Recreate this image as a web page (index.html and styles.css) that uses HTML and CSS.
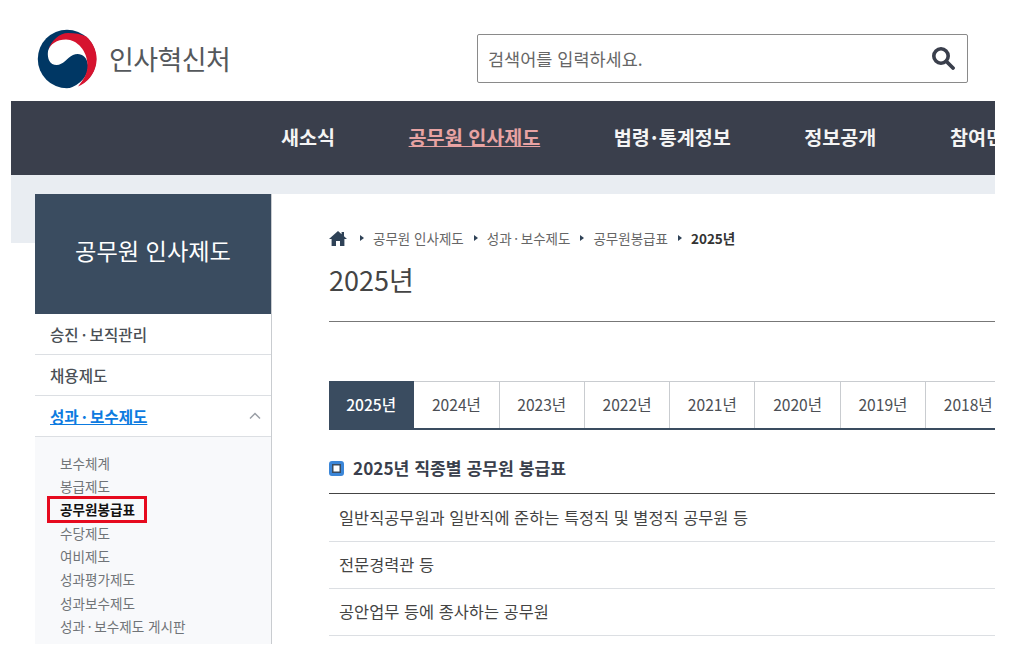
FILE: index.html
```html
<!DOCTYPE html>
<html lang="ko">
<head>
    <meta charset="UTF-8">
    <meta name="viewport" content="width=device-width, initial-scale=1.0">
    <title>2025년 | 인사혁신처</title>
    <link rel="stylesheet" href="styles.css">
</head>
<body>

<section id="wrapper">

<header class="top">
    <a class="logo">
        <svg class="logo-mark" viewBox="0 0 60 60" width="60" height="60">
            <circle cx="30" cy="30" r="29.2" fill="#003764"/>
            <path d="M30 60C44 56 52 46 51 36C50 26 42 23 36 26C30 29 26 36 19.7 36C13 36 10 30 11 22C14 12 24 7 31 7C45 7 56 18 56 32C56 45 48 55 40 60Z" fill="#fff"/>
            <path d="M11 22C14 11 23 4 31 4C38 4 44 5 49.3 7.6A29.5 29.5 0 0 1 41 57.4C47 50 50.5 45 50.5 36C50.5 22 40 10.5 29 10.5C20 10.5 13 15 11 22Z" fill="#d6132f"/>
        </svg>
        <span class="logo-name">인사혁신처</span>
    </a>
    <form class="search">
        <span class="search-hint">검색어를 입력하세요.</span>
        <svg class="search-icon" viewBox="0 0 24 24" width="24" height="24">
            <circle cx="10" cy="10" r="7.2" fill="none" stroke="#3a3f4c" stroke-width="3.6"/>
            <path d="M15.5 15.5L22 22" stroke="#3a3f4c" stroke-width="3.8" stroke-linecap="round"/>
        </svg>
    </form>
</header>

<nav class="gnb">
    <a>새소식</a>
    <a class="current">공무원 인사제도</a>
    <a>법령&hairsp;·&hairsp;통계정보</a>
    <a>정보공개</a>
    <a>참여민원</a>
</nav>

<section class="layout">
    <aside class="side">
        <h2 class="side-title">공무원 인사제도</h2>
        <ul class="side-menu">
            <li>승진&thinsp;·&thinsp;보직관리</li>
            <li>채용제도</li>
            <li class="open">
                <a>성과&thinsp;·&thinsp;보수제도</a>
                <svg viewBox="0 0 12 8" width="12" height="8"><path d="M1 6.5L6 1.5L11 6.5" fill="none" stroke="#9a9fa6" stroke-width="1.5"/></svg>
            </li>
        </ul>
        <ul class="side-sub">
            <li>보수체계</li>
            <li>봉급제도</li>
            <li><b class="marked">공무원봉급표</b></li>
            <li>수당제도</li>
            <li>여비제도</li>
            <li>성과평가제도</li>
            <li>성과보수제도</li>
            <li>성과&thinsp;·&thinsp;보수제도 게시판</li>
        </ul>
    </aside>

    <main class="content">
        <p class="crumbs">
            <svg class="home" viewBox="0 0 18 15" width="18" height="15"><path d="M9 0L0 8H2.6V15H7V10H11V15H15.4V8H18L15 5.3V1H12.6V3.2Z" fill="#2f4257"/></svg>
            <i></i><span>공무원 인사제도</span>
            <i></i><span>성과&thinsp;·&thinsp;보수제도</span>
            <i></i><span>공무원봉급표</span>
            <i></i><b>2025년</b>
        </p>
        <h1 class="page-title">2025년</h1>

        <ul class="tabs">
            <li class="active">2025년</li>
            <li>2024년</li>
            <li>2023년</li>
            <li>2022년</li>
            <li>2021년</li>
            <li>2020년</li>
            <li>2019년</li>
            <li>2018년</li>
        </ul>

        <h3 class="sub-title">2025년 직종별 공무원 봉급표</h3>
        <ul class="pay-list">
            <li>일반직공무원과 일반직에 준하는 특정직 및 별정직 공무원 등</li>
            <li>전문경력관 등</li>
            <li>공안업무 등에 종사하는 공무원</li>
        </ul>
    </main>
</section>

</section>

</body>
</html>
```
FILE: styles.css
```css
:root{
    --navy: #3a4c60;
    --dark: #3a3f4c;
    --text-color: #444;
    --line: #dcdfe3;
}

*{
padding: 0;
margin: 0;
box-sizing: border-box;
font-family: "Noto Sans CJK KR", "Noto Sans", sans-serif;
}

ul{
list-style: none;
}

body{
background: #fff;
overflow: hidden;
}

#wrapper{
width: 984px;
margin-left: 11px;
overflow: hidden;
}

.top{
display: flex;
align-items: center;
justify-content: space-between;
height: 101px;
padding: 0 27px 0 26px;
}

.logo{
display: flex;
align-items: center;
gap: 12px;
margin-top: 16px;
}

.logo-name{
font-size: 27px;
color: #55585c;
letter-spacing: -0.6px;
}

.search{
display: flex;
align-items: center;
justify-content: space-between;
width: 491px;
height: 49px;
padding: 0 12px 0 10px;
margin-top: 15px;
border: 1px solid #8a8a8a;
border-radius: 2px;
}

.search-hint{
font-size: 17.5px;
color: #666;
}

.gnb{
display: flex;
align-items: center;
gap: 73.5px;
height: 74px;
padding: 0 0 3px 270px;
background: var(--dark);
white-space: nowrap;
}

.gnb a{
font-size: 19.6px;
font-weight: 700;
color: #f4f4f4;
}

.gnb .current{
color: #e8a3a3;
text-decoration: underline;
}

.layout{
display: flex;
padding: 19px 0 0 24px;
background:
    linear-gradient(#e9edf2, #e9edf2) no-repeat 0 0 / 100% 19px,
    linear-gradient(#e9edf2, #e9edf2) no-repeat 0 0 / 24px 68px;
}

.side{
flex: 0 0 237px;
height: 450px;
border-right: 1px solid #c9ccd0;
}

.side-title{
display: flex;
align-items: center;
justify-content: center;
height: 120px;
padding-bottom: 8px;
font-size: 23.2px;
font-weight: 400;
color: #fff;
background: var(--navy);
}

.side-menu li{
display: flex;
align-items: center;
justify-content: space-between;
height: 41px;
padding: 0 10px 0 15px;
font-size: 15.6px;
font-weight: 500;
color: #4a4f55;
border-bottom: 1px solid var(--line);
}

.side-menu .open a{
font-weight: 700;
color: #0d7be0;
text-decoration: underline;
}

.side-sub{
height: 209px;
padding: 14.5px 0 0 25px;
background: #f8f9fb;
}

.side-sub li{
height: 23.4px;
line-height: 23.4px;
font-size: 13.6px;
color: #707478;
}

.marked{
position: relative;
color: #111;
}

.marked::after{
content: "";
position: absolute;
top: -3px;
bottom: -4px;
left: -13px;
right: -12px;
border: 3px solid #e60a1e;
}

.content{
flex: 1;
min-width: 0;
padding: 0 0 0 57px;
}

.crumbs{
display: flex;
align-items: center;
height: 18px;
margin-top: 35px;
font-size: 13.5px;
color: #666;
white-space: nowrap;
}

.home{
margin-right: 3px;
}

.crumbs i{
width: 0;
height: 0;
margin: 0 9px 0 10px;
border-left: 4px solid #2f4257;
border-top: 3px solid transparent;
border-bottom: 3px solid transparent;
}

.crumbs b{
color: #333;
}

.page-title{
height: 75px;
padding-top: 13px;
font-size: 27px;
font-weight: 400;
line-height: 40px;
color: var(--text-color);
border-bottom: 1px solid #777;
}

.tabs{
display: flex;
width: 760px;
margin-top: 59px;
border-bottom: 2px solid var(--navy);
}

.tabs li{
flex: 0 0 85.3px;
height: 47px;
line-height: 45px;
text-align: center;
font-size: 15.6px;
color: #4c4f55;
border-top: 1px solid #c9ccd0;
border-right: 1px solid #c9ccd0;
}

.tabs .active{
font-weight: 500;
color: #fff;
background: var(--navy);
border-color: var(--navy);
}

.sub-title{
position: relative;
height: 64px;
padding: 25px 0 0 24px;
font-size: 17.2px;
line-height: 26px;
font-weight: 700;
color: #3a3f4c;
border-bottom: 1px solid #444;
}

.sub-title::before{
content: "";
box-sizing: border-box;
position: absolute;
left: 0;
top: 31px;
width: 15px;
height: 15px;
border: 3.5px solid #3b86d8;
border-radius: 3px;
background: #fff;
box-shadow: inset 0 0 0 1.5px var(--navy);
}

.pay-list{
padding-top: 1px;
}

.pay-list li{
height: 47px;
line-height: 45px;
padding-left: 10px;
font-size: 16.4px;
color: var(--text-color);
border-bottom: 1px solid var(--line);
}
```
